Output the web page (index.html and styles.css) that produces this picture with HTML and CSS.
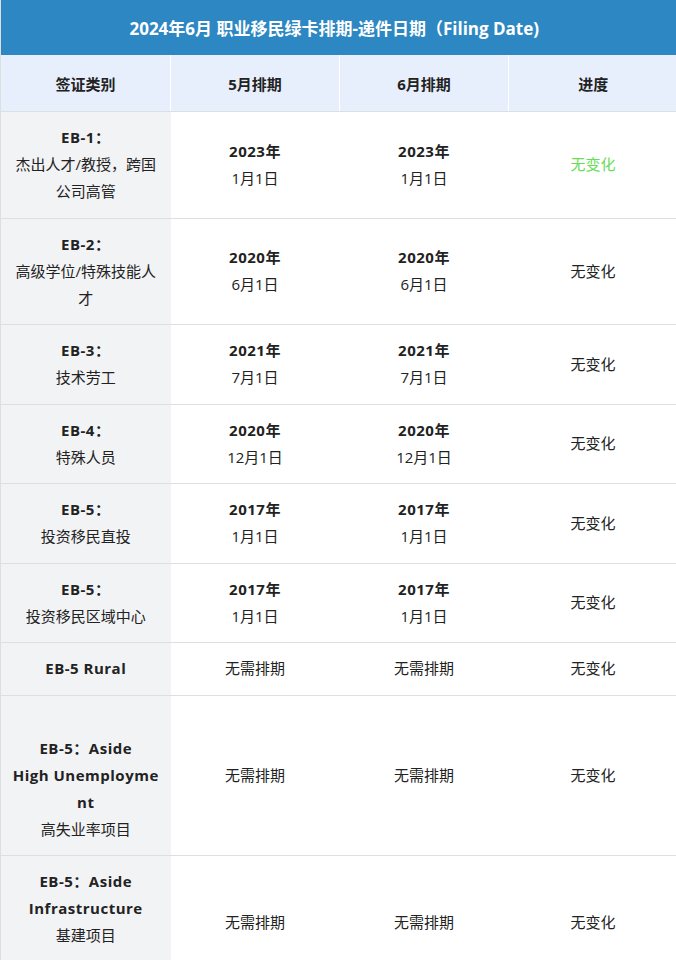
FILE: index.html
```html
<!DOCTYPE html>
<html lang="zh-CN">
<head>
<meta charset="utf-8">
<link rel="stylesheet" href="styles.css">
</head>
<body>
<table class="sched">
  <colgroup>
    <col class="c1"><col class="c2"><col class="c3"><col class="c4">
  </colgroup>
  <thead>
    <tr><th colspan="4" class="title">2024年6月 职业移民绿卡排期-递件日期（Filing Date)</th></tr>
    <tr class="head">
      <th>签证类别</th><th>5月排期</th><th>6月排期</th><th>进度</th>
    </tr>
  </thead>
  <tbody>
    <tr>
      <td class="cat"><b>EB-1：</b><br>杰出人才/教授，跨国<br>公司高管</td>
      <td><b>2023年</b><br>1月1日</td>
      <td><b>2023年</b><br>1月1日</td>
      <td class="green">无变化</td>
    </tr>
    <tr>
      <td class="cat"><b>EB-2：</b><br>高级学位/特殊技能人<br>才</td>
      <td><b>2020年</b><br>6月1日</td>
      <td><b>2020年</b><br>6月1日</td>
      <td>无变化</td>
    </tr>
    <tr>
      <td class="cat"><b>EB-3：</b><br>技术劳工</td>
      <td><b>2021年</b><br>7月1日</td>
      <td><b>2021年</b><br>7月1日</td>
      <td>无变化</td>
    </tr>
    <tr>
      <td class="cat"><b>EB-4：</b><br>特殊人员</td>
      <td><b>2020年</b><br>12月1日</td>
      <td><b>2020年</b><br>12月1日</td>
      <td>无变化</td>
    </tr>
    <tr>
      <td class="cat"><b>EB-5：</b><br>投资移民直投</td>
      <td><b>2017年</b><br>1月1日</td>
      <td><b>2017年</b><br>1月1日</td>
      <td>无变化</td>
    </tr>
    <tr>
      <td class="cat"><b>EB-5：</b><br>投资移民区域中心</td>
      <td><b>2017年</b><br>1月1日</td>
      <td><b>2017年</b><br>1月1日</td>
      <td>无变化</td>
    </tr>
    <tr>
      <td class="cat"><b>EB-5 Rural</b></td>
      <td>无需排期</td>
      <td>无需排期</td>
      <td>无变化</td>
    </tr>
    <tr>
      <td class="cat"><br><b>EB-5：Aside</b><br><b>High Unemployme</b><br><b>nt</b><br>高失业率项目</td>
      <td>无需排期</td>
      <td>无需排期</td>
      <td>无变化</td>
    </tr>
    <tr>
      <td class="cat"><b>EB-5：Aside</b><br><b>Infrastructure</b><br>基建项目<br><br></td>
      <td>无需排期</td>
      <td>无需排期</td>
      <td>无变化</td>
    </tr>
  </tbody>
</table>
</body>
</html>
```

FILE: styles.css
```css
html, body {
  margin: 0;
  padding: 0;
  background: #ffffff;
  overflow: hidden;
}

body {
  font-family: "Open Sans", "Noto Sans CJK SC", sans-serif;
  font-size: 15px;
  color: #222222;
}

.sched {
  width: 677px;
  border-collapse: collapse;
  table-layout: fixed;
  border-left: 1px solid #dcdfe4;
}

.c1 { width: 170px; }
.c2 { width: 169px; }
.c3 { width: 169px; }
.c4 { width: 169px; }

.title {
  background: #2d87c2;
  color: #ffffff;
  font-size: 17px;
  font-weight: 700;
  height: 55px;
  padding: 0 10px 0 0;
  text-align: center;
  vertical-align: middle;
}

.head th {
  background: #e7effc;
  font-weight: 700;
  height: 56px;
  padding: 0 8px;
  text-align: center;
  vertical-align: middle;
  border-left: 1px solid #ffffff;
  border-bottom: 1px solid #dcdfe4;
  color: #222222;
}

.head th:first-child {
  border-left: none;
}

td {
  text-align: center;
  vertical-align: middle;
  padding: 12px 6px 12.5px;
  line-height: 27px;
  border-bottom: 1px solid #dcdfe4;
  word-break: break-all;
}

td b {
  font-weight: 700;
  letter-spacing: 0.5px;
}

.cat {
  background: #f2f3f5;
}

.green {
  color: #66dd55;
}
```
